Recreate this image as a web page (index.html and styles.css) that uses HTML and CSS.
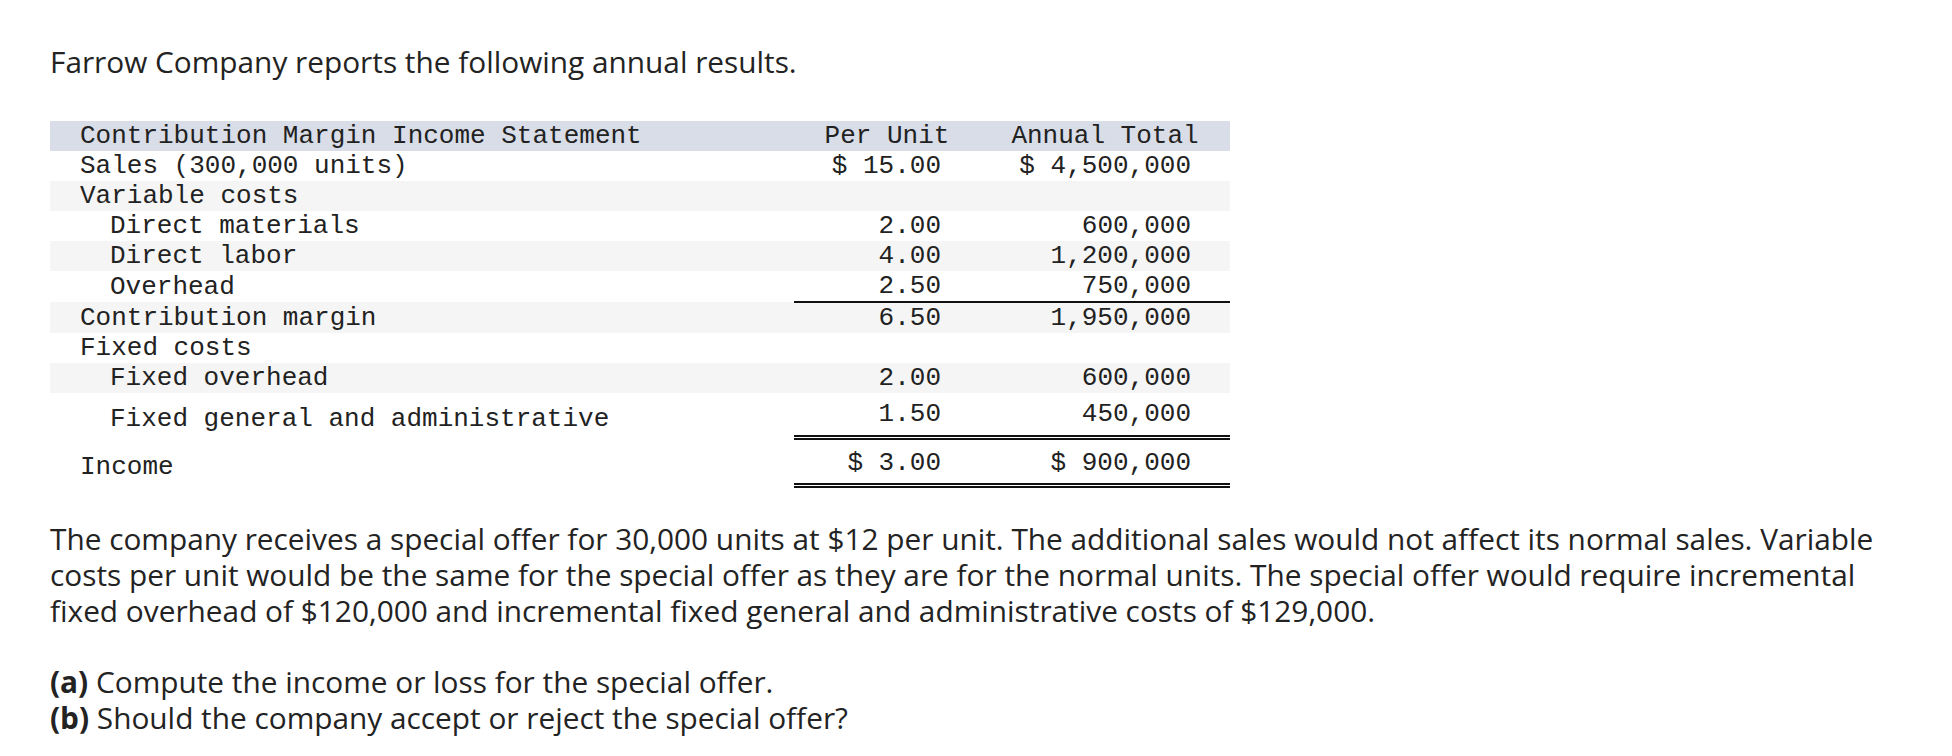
FILE: index.html
```html
<!DOCTYPE html>
<html lang="en">
<head>
<meta charset="utf-8">
<title>Farrow Company</title>
<link rel="stylesheet" href="styles.css">
</head>
<body>
<main class="question">
  <p class="intro">Farrow Company reports the following annual results.</p>
  <table class="statement">
    <thead>
      <tr class="head">
        <th class="label">Contribution Margin Income Statement</th>
        <th class="num">Per Unit</th>
        <th class="num">Annual Total</th>
      </tr>
    </thead>
    <tbody>
      <tr><td class="label">Sales (300,000 units)</td><td class="val">$ 15.00</td><td class="val">$ 4,500,000</td></tr>
      <tr class="alt"><td class="label">Variable costs</td><td class="val"></td><td class="val"></td></tr>
      <tr><td class="label sub">Direct materials</td><td class="val">2.00</td><td class="val">600,000</td></tr>
      <tr class="alt"><td class="label sub">Direct labor</td><td class="val">4.00</td><td class="val">1,200,000</td></tr>
      <tr class="rule"><td class="label sub">Overhead</td><td class="val">2.50</td><td class="val">750,000</td></tr>
      <tr class="alt"><td class="label">Contribution margin</td><td class="val">6.50</td><td class="val">1,950,000</td></tr>
      <tr><td class="label">Fixed costs</td><td class="val"></td><td class="val"></td></tr>
      <tr class="alt"><td class="label sub">Fixed overhead</td><td class="val">2.00</td><td class="val">600,000</td></tr>
      <tr class="tall double"><td class="label sub">Fixed general and administrative</td><td class="val">1.50</td><td class="val">450,000</td></tr>
      <tr class="total double"><td class="label">Income</td><td class="val">$ 3.00</td><td class="val">$ 900,000</td></tr>
    </tbody>
  </table>
  <p class="body">The company receives a special offer for 30,000 units at $12 per unit. The additional sales would not affect its normal sales. Variable costs per unit would be the same for the special offer as they are for the normal units. The special offer would require incremental fixed overhead of $120,000 and incremental fixed general and administrative costs of $129,000.</p>
  <p class="ask"><span class="line"><b>(a)</b> Compute the income or loss for the special offer.</span><span class="line"><b>(b)</b> Should the company accept or reject the special offer?</span></p>
</main>
</body>
</html>
```
FILE: styles.css
```css
html, body {
  margin: 0;
  padding: 0;
  background: #ffffff;
}

.question {
  padding: 44px 50px 0 50px;
  font-family: "Open Sans", "Lato", "Liberation Sans", sans-serif;
  font-size: 29.8px;
  line-height: 36px;
  color: #232323;
}

.intro {
  margin: 0 0 41px 0;
}

.statement {
  border-collapse: collapse;
  width: 1180px;
  font-family: "Liberation Mono", "DejaVu Sans Mono", monospace;
  font-size: 26px;
  line-height: 30px;
  color: #222222;
}

.statement th,
.statement td {
  padding: 0;
  height: 30px;
  white-space: pre;
  font-weight: normal;
}

.statement .head {
  background: #d9dde7;
}

.statement .label {
  width: 714px;
  padding-left: 30px;
  text-align: left;
}

.statement .label.sub {
  padding-left: 60px;
  width: 684px;
}

.statement .num {
  text-align: center;
}

.statement th.num:nth-child(2) {
  width: 186px;
}

.statement th.num:nth-child(3) {
  width: 250px;
}

.statement .val {
  text-align: right;
  padding-right: 39px;
}

.statement .alt {
  background: #f5f5f5;
}

.statement .rule .val {
  border-bottom: 2px solid #111111;
}

.statement .tall .val {
  padding-top: 6px;
  padding-bottom: 6px;
}

.statement .tall .label {
  padding-top: 10px;
  padding-bottom: 2px;
}

.statement .double .val {
  border-bottom: 5px double #111111;
}

.statement .total .val {
  padding-top: 8px;
  padding-bottom: 5px;
}

.statement .total .label {
  padding-top: 12px;
  padding-bottom: 1px;
}

.body {
  margin: 33px 0 0 0;
}

.ask {
  margin: 35px 0 0 0;
  display: flex;
  flex-direction: column;
}

.ask .line {
  display: block;
  height: 36px;
}

.ask b {
  font-weight: 700;
}
```
